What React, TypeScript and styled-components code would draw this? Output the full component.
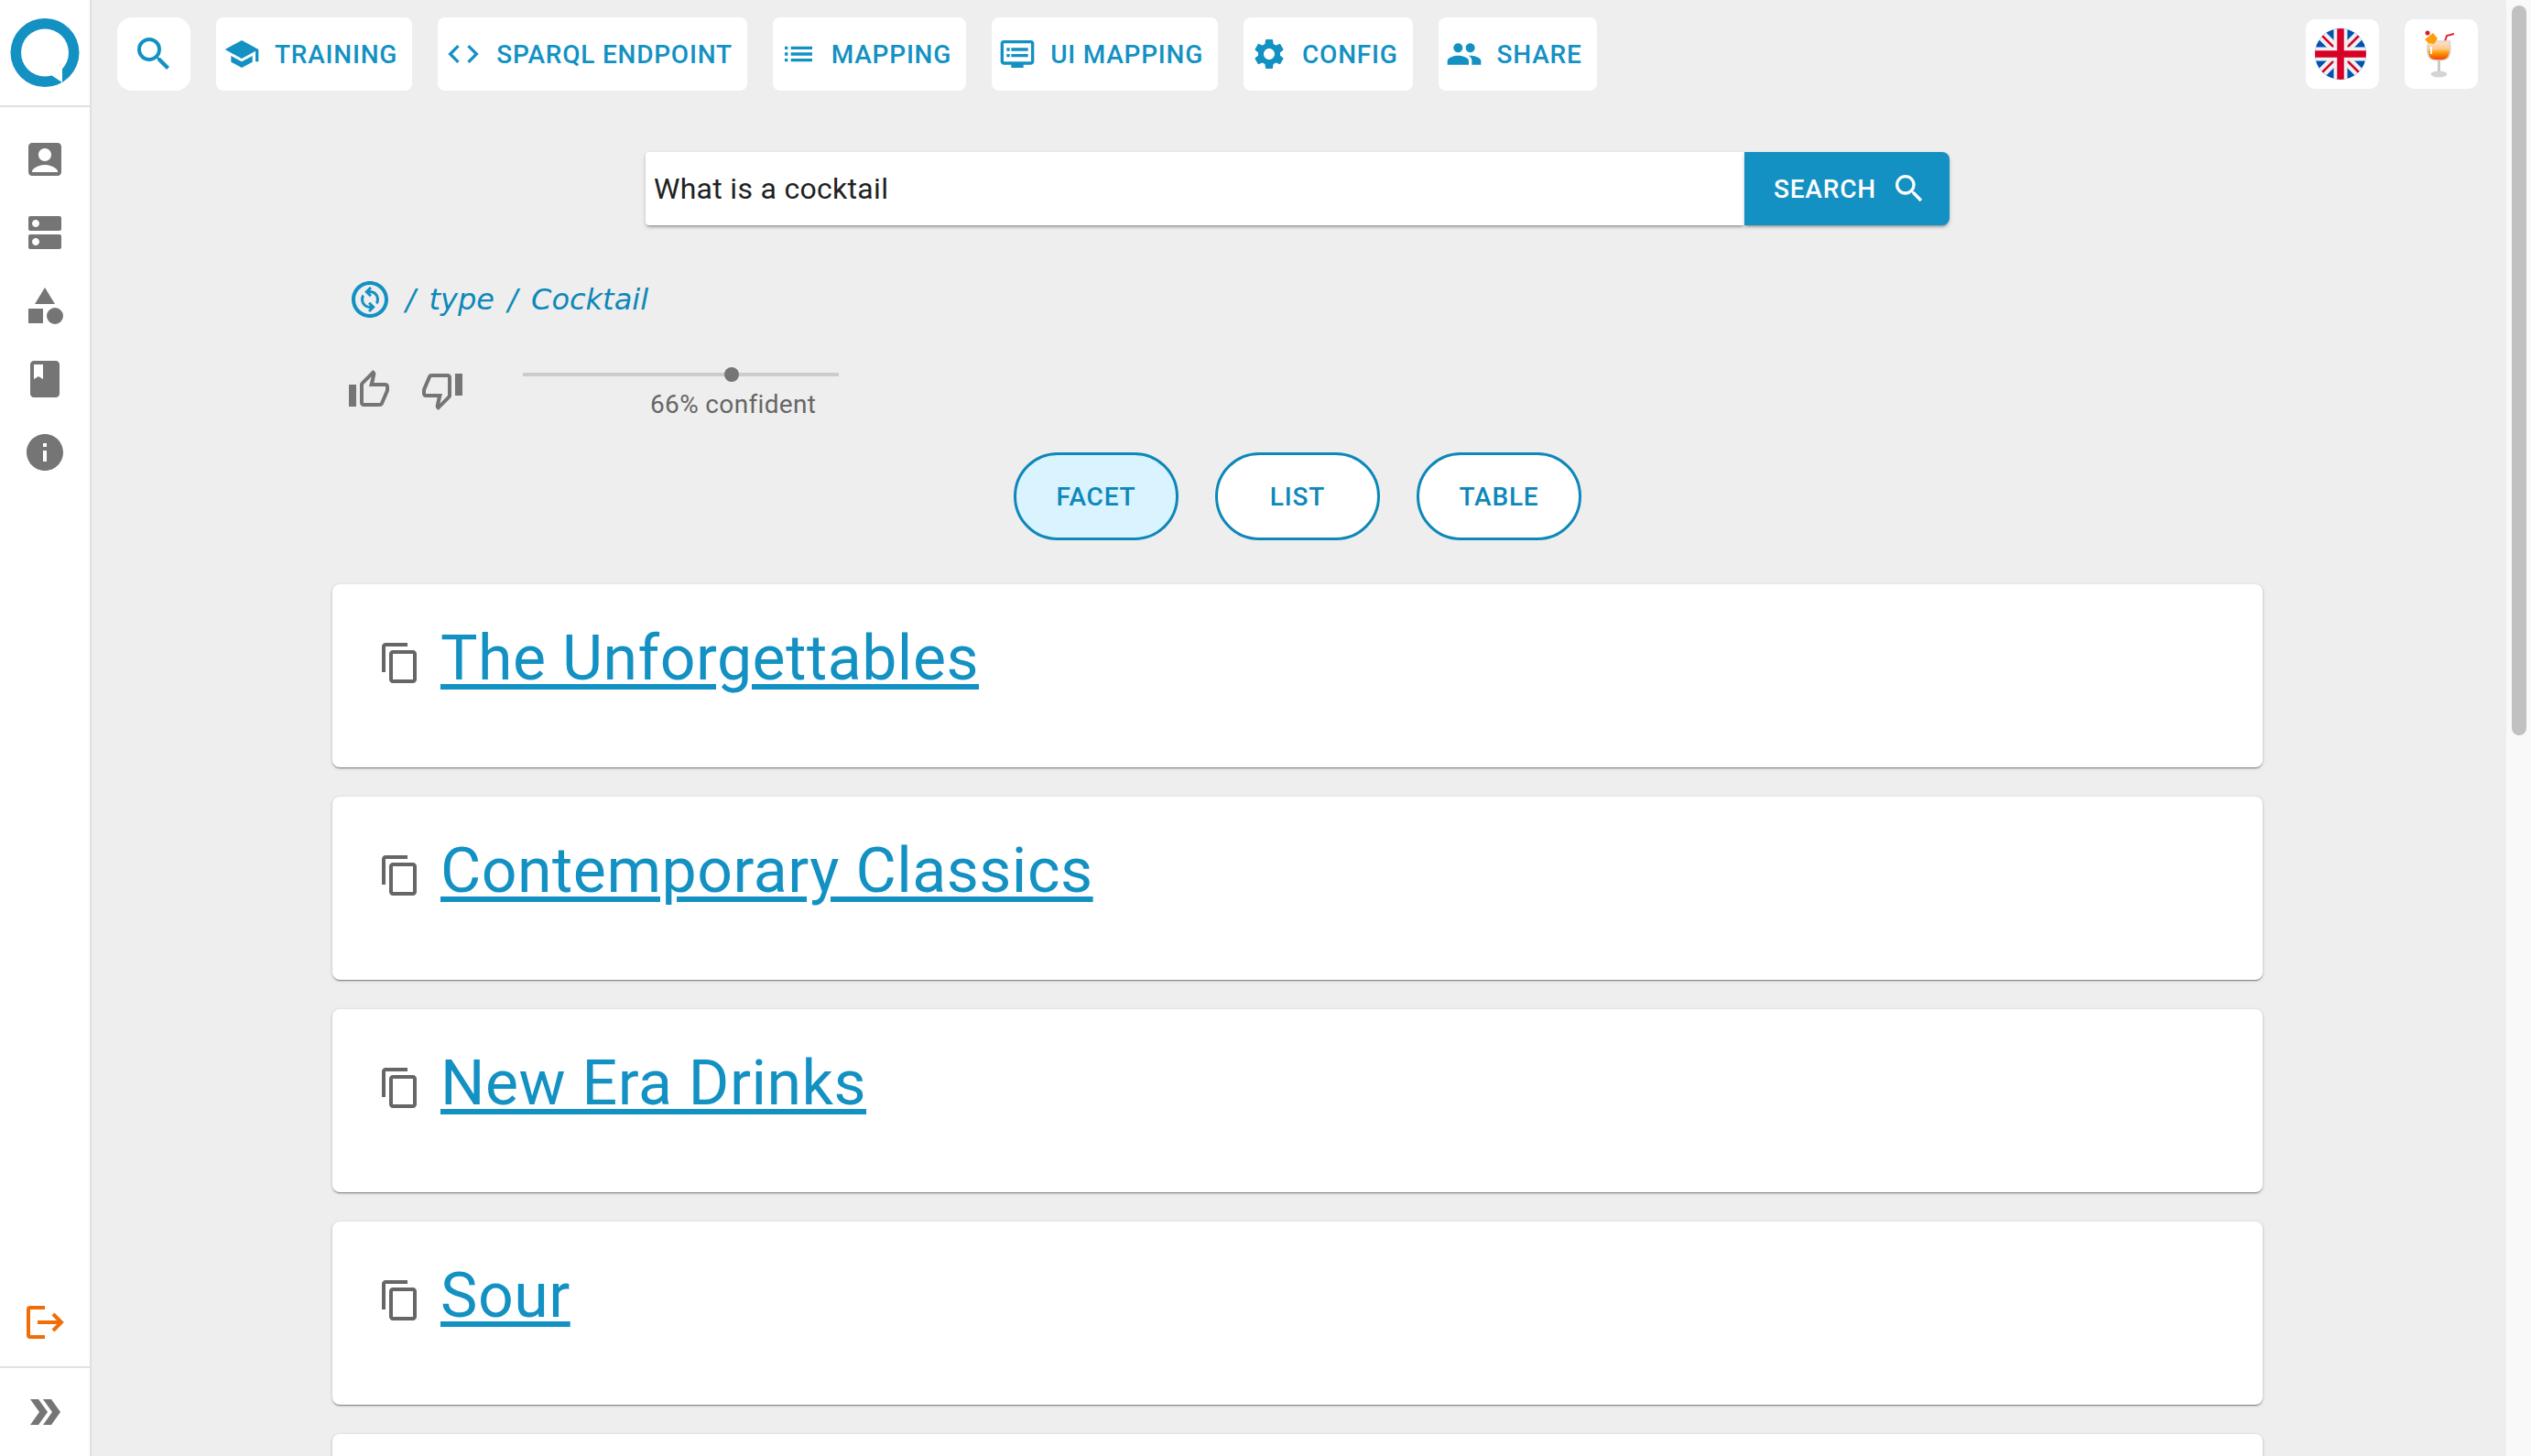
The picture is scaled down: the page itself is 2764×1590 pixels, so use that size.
import styled, {createGlobalStyle} from 'styled-components';
import {
  MdAccountBox,
  MdBook,
  MdCategory,
  MdCode,
  MdContentCopy,
  MdDns,
  MdDoubleArrow,
  MdDvr,
  MdInfo,
  MdList,
  MdOutlineChangeCircle,
  MdOutlineThumbDown,
  MdOutlineThumbUp,
  MdPeople,
  MdSchool,
  MdSearch,
  MdSettings,
} from 'react-icons/md';

const PRIMARY = '#1391c3';
const GREY = '#757575';

const GlobalStyle = createGlobalStyle`
  html, body {
    margin: 0;
    height: 100%;
    overflow: hidden;
    background: #eeeeee;
    font-family: Roboto, "Liberation Sans", sans-serif;
  }
`;

const Page = styled.div`
  display: flex;
  height: 1590px;
  overflow: hidden;
`;

const Sidebar = styled.aside`
  flex: none;
  width: 98px;
  display: flex;
  flex-direction: column;
  background: #fff;
  border-right: 2px solid #e0e0e0;
`;

const LogoBox = styled.div`
  height: 117px;
  display: flex;
  align-items: flex-start;
  justify-content: center;
  padding-top: 19px;
  box-sizing: border-box;
  border-bottom: 2px solid #e0e0e0;
`;

const NavList = styled.nav`
  flex: 1;
  padding-top: 17px;
`;

const NavItem = styled.div<{$color?: string}>`
  height: 80px;
  display: flex;
  align-items: center;
  justify-content: center;
  color: ${p => p.$color ?? GREY};
  font-size: 48px;
`;

const Collapse = styled.div`
  height: 96px;
  display: flex;
  align-items: center;
  justify-content: center;
  color: ${GREY};
  font-size: 48px;
  margin-top: 8px;
  border-top: 2px solid #e0e0e0;
`;

const Main = styled.main`
  flex: 1;
  min-width: 0;
  padding: 19px 30px 0 28px;
`;

const TopBar = styled.header`
  display: flex;
  align-items: center;
  gap: 28px;
`;

const TopButton = styled.div`
  height: 80px;
  display: flex;
  align-items: center;
  gap: 16px;
  padding: 0 16px 0 8px;
  background: #fff;
  border-radius: 8px;
  color: ${PRIMARY};
  font-size: 28px;
  font-weight: 500;
  letter-spacing: 0.78px;
  text-transform: uppercase;
  svg {
    font-size: 40px;
    flex: none;
  }
`;

const SearchIconButton = styled.div`
  width: 80px;
  height: 80px;
  display: flex;
  align-items: center;
  justify-content: center;
  background: #fff;
  border-radius: 16px;
  color: ${PRIMARY};
  font-size: 48px;
`;

const PickerButton = styled.div`
  width: 80px;
  height: 76px;
  display: flex;
  align-items: center;
  justify-content: center;
  padding-right: 4px;
  box-sizing: border-box;
  background: #fff;
  border-radius: 10px;
`;

const BarSpacer = styled.div`
  flex: 1;
`;

const SearchRow = styled.div`
  display: flex;
  justify-content: center;
  margin-top: 67px;
`;

const SearchField = styled.div`
  width: 1200px;
  height: 80px;
  display: flex;
  align-items: center;
  padding-left: 9px;
  box-sizing: border-box;
  background: #fff;
  border-radius: 4px 0 0 4px;
  color: #212121;
  font-size: 32px;
  letter-spacing: 0.3px;
  box-shadow: 0 3px 3px -2px rgba(0, 0, 0, 0.3), 0 2px 4px rgba(0, 0, 0, 0.2);
`;

const SearchButton = styled.div`
  width: 224px;
  height: 80px;
  display: flex;
  align-items: center;
  gap: 16px;
  padding-left: 32px;
  box-sizing: border-box;
  background: ${PRIMARY};
  border-radius: 0 8px 8px 0;
  color: #fff;
  font-size: 28px;
  font-weight: 500;
  letter-spacing: 0.8px;
  box-shadow: 0 3px 3px -2px rgba(0, 0, 0, 0.3), 0 2px 4px rgba(0, 0, 0, 0.2);
  svg {
    font-size: 40px;
  }
`;

const Content = styled.div`
  width: 2108px;
  margin: 0 auto;
`;

const Breadcrumb = styled.div`
  display: flex;
  align-items: center;
  gap: 15px;
  margin-top: 57px;
  padding-left: 17px;
  color: #0d88b9;
  font-family: "DejaVu Sans", sans-serif;
  font-size: 32px;
  font-style: italic;
  word-spacing: 4.500px;
  svg {
    font-size: 48px;
    color: ${PRIMARY};
  }
`;

const Feedback = styled.div`
  display: flex;
  height: 108px;
  margin-top: 35px;
`;

const ThumbButton = styled.div`
  width: 80px;
  height: 80px;
  display: flex;
  align-items: center;
  justify-content: center;
  color: ${GREY};
  font-size: 48px;
`;

const Confidence = styled.div`
  width: 345px;
  margin-left: 48px;
  padding-top: 21px;
`;

const Track = styled.div`
  position: relative;
  height: 4px;
  background: #cccccc;
`;

const TrackThumb = styled.div<{$value: number}>`
  position: absolute;
  left: ${p => p.$value}%;
  top: -6px;
  width: 16px;
  height: 16px;
  margin-left: -8px;
  border-radius: 50%;
  background: ${GREY};
`;

const ConfidenceLabel = styled.div<{$value: number}>`
  width: max-content;
  margin-top: 15px;
  margin-left: ${p => p.$value}%;
  transform: translateX(calc(-50% + 2px));
  color: #666;
  font-size: 28px;
  letter-spacing: 0.35px;
  line-height: 32px;
`;

const Pills = styled.div`
  display: flex;
  justify-content: center;
  gap: 40px;
`;

const Pill = styled.div<{$active?: boolean}>`
  width: 180px;
  height: 96px;
  display: flex;
  align-items: center;
  justify-content: center;
  box-sizing: border-box;
  border: 3px solid #0d88b9;
  border-radius: 48px;
  background: ${p => (p.$active ? '#d9f3ff' : '#fff')};
  color: #0d88b9;
  font-size: 28px;
  font-weight: 500;
  letter-spacing: 0.8px;
`;

const CardList = styled.div`
  display: flex;
  flex-direction: column;
  gap: 32px;
  margin-top: 48px;
`;

const Card = styled.article`
  height: 200px;
  flex: none;
  display: flex;
  align-items: flex-start;
  gap: 20px;
  padding: 41px 0 0 50px;
  box-sizing: border-box;
  background: #fff;
  border-radius: 8px;
  box-shadow: 0 2px 1px -1px rgba(0, 0, 0, 0.3), 0 1px 2px rgba(0, 0, 0, 0.2),
    0 1px 4px rgba(0, 0, 0, 0.12);
`;

const CopyIcon = styled.div`
  color: #666;
  font-size: 48px;
  line-height: 0;
  margin-top: 21px;
`;

const CardTitle = styled.a`
  color: ${PRIMARY};
  font-size: 68px;
  line-height: 1.2;
  letter-spacing: 0.5px;
  text-decoration: underline;
  text-decoration-thickness: 6px;
  text-underline-offset: 5px;
`;

const ScrollTrack = styled.div`
  flex: none;
  width: 28px;
  box-sizing: border-box;
  padding: 6px 6px 0;
  background: #f9f9f9;
  border-left: 1px solid #ececec;
`;

const ScrollThumb = styled.div`
  height: 797px;
  width: 16px;
  border-radius: 8px;
  background: #c1c1c1;
`;

const topLinks = [
  {label: 'Training', icon: <MdSchool />},
  {label: 'SPARQL Endpoint', icon: <MdCode />},
  {label: 'Mapping', icon: <MdList />},
  {label: 'UI Mapping', icon: <MdDvr />},
  {label: 'Config', icon: <MdSettings />},
  {label: 'Share', icon: <MdPeople />},
];

const cards = ['The Unforgettables', 'Contemporary Classics', 'New Era Drinks', 'Sour', ''];

const Logo = () => (
  <svg width="76" height="78" viewBox="0 0 76 78">
    <circle cx="38" cy="38.500" r="37.500" fill={PRIMARY} />
    <circle cx="38" cy="38.500" r="26" fill="#fff" />
    <path d="M44 62.500 57 71V55z" fill="#fff" />
  </svg>
);

const LogoutIcon = () => (
  <svg width="48" height="48" viewBox="0 0 48 48" fill="none" stroke="#f26d04" strokeWidth="4">
    <path d="M24 8H8a2 2 0 0 0-2 2v28a2 2 0 0 0 2 2h16" />
    <path d="M16 24h25M33 15l9 9-9 9" />
  </svg>
);

const FlagIcon = () => (
  <svg width="56" height="56" viewBox="0 0 56 56">
    <clipPath id="flag-round">
      <circle cx="28" cy="28" r="28" />
    </clipPath>
    <g clipPath="url(#flag-round)">
      <rect width="56" height="56" fill="#0052b4" />
      <path d="M0 0 56 56M56 0 0 56" stroke="#f0f0f0" strokeWidth="11" />
      <path d="M5 5 24 24M51 5 32 24M5 51 24 32M51 51 32 32" stroke="#d80027" strokeWidth="2.500" />
      <path d="M28 0V56M0 28H56" stroke="#f0f0f0" strokeWidth="15" />
      <path d="M28 0V56M0 28H56" stroke="#d80027" strokeWidth="7.500" />
    </g>
  </svg>
);

const CocktailIcon = () => (
  <svg width="32" height="52" viewBox="0 0 32 52">
    <defs>
      <linearGradient id="drink" x1="0" y1="0" x2="0" y2="1">
        <stop offset="0" stopColor="#ffe3cc" />
        <stop offset="0.4" stopColor="#ffc98a" />
        <stop offset="0.6" stopColor="#ff9a00" />
        <stop offset="1" stopColor="#f2380a" />
      </linearGradient>
    </defs>
    <path d="M22 12l2-6 8-2" fill="none" stroke="#e8202a" strokeWidth="2" />
    <path d="M4 12h23c1.500 6 1 13-1 17-1.500 3-6 4-10.500 4S6 32 4.500 29C2.500 25 2.500 18 4 12z" fill="url(#drink)" stroke="#d6d6d6" strokeWidth="1.500" />
    <path d="M6 18h2v8H6z" fill="#fff" />
    <path d="M14 33h3v12h-3z" fill="#c9c9c9" />
    <ellipse cx="15.500" cy="48" rx="9" ry="3.500" fill="#d4d4d4" />
    <path d="M0 10 9 3l5 6-4 6-6-1z" fill="#ff9d0a" />
    <circle cx="3" cy="3" r="2.500" fill="#d91c24" />
  </svg>
);

export default function App() {
  return (
    <>
      <GlobalStyle />
      <Page>
        <Sidebar>
          <LogoBox>
            <Logo />
          </LogoBox>
          <NavList>
            <NavItem><MdAccountBox /></NavItem>
            <NavItem><MdDns /></NavItem>
            <NavItem><MdCategory /></NavItem>
            <NavItem><MdBook /></NavItem>
            <NavItem><MdInfo /></NavItem>
          </NavList>
          <NavItem $color="#f26d04"><LogoutIcon /></NavItem>
          <Collapse><MdDoubleArrow /></Collapse>
        </Sidebar>
        <Main>
          <TopBar>
            <SearchIconButton><MdSearch /></SearchIconButton>
            {topLinks.map(link => (
              <TopButton key={link.label}>
                {link.icon}
                {link.label}
              </TopButton>
            ))}
            <BarSpacer />
            <PickerButton><FlagIcon /></PickerButton>
            <PickerButton><CocktailIcon /></PickerButton>
          </TopBar>
          <SearchRow>
            <SearchField>What is a cocktail</SearchField>
            <SearchButton>
              SEARCH
              <MdSearch />
            </SearchButton>
          </SearchRow>
          <Content>
            <Breadcrumb>
              <MdOutlineChangeCircle />
              <span>/ type / Cocktail</span>
            </Breadcrumb>
            <Feedback>
              <ThumbButton><MdOutlineThumbUp /></ThumbButton>
              <ThumbButton><MdOutlineThumbDown /></ThumbButton>
              <Confidence>
                <Track>
                  <TrackThumb $value={66} />
                </Track>
                <ConfidenceLabel $value={66}>66% confident</ConfidenceLabel>
              </Confidence>
            </Feedback>
            <Pills>
              <Pill $active>FACET</Pill>
              <Pill>LIST</Pill>
              <Pill>TABLE</Pill>
            </Pills>
            <CardList>
              {cards.map((title, idx) => (
                <Card key={idx}>
                  <CopyIcon><MdContentCopy /></CopyIcon>
                  <CardTitle>{title}</CardTitle>
                </Card>
              ))}
            </CardList>
          </Content>
        </Main>
        <ScrollTrack>
          <ScrollThumb />
        </ScrollTrack>
      </Page>
    </>
  );
}
